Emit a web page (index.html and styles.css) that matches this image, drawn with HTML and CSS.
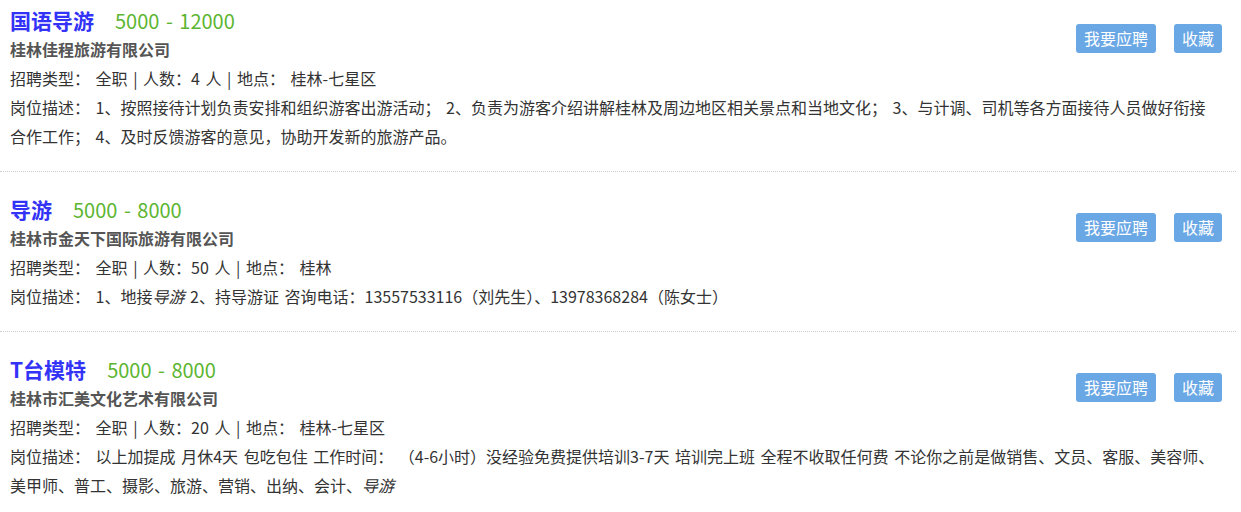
FILE: index.html
```html
<!DOCTYPE html>
<html>
<head>
	<meta charset="utf-8">
	<title>招聘信息</title>
	<link rel="stylesheet" href="styles.css">
</head>
<body>
	<div class="job-list">
		<div class="job-item">
			<div class="job-actions">
				<a href="#" class="btn">我要应聘</a>
				<a href="#" class="btn">收藏</a>
			</div>
			<h3 class="job-title">国语导游<span class="salary">5000 - 12000</span></h3>
			<p class="company">桂林佳程旅游有限公司</p>
			<p class="meta">招聘类型： 全职 | 人数：4 人 | 地点： 桂林-七星区</p>
			<p class="desc">岗位描述： 1、按照接待计划负责安排和组织游客出游活动； 2、负责为游客介绍讲解桂林及周边地区相关景点和当地文化； 3、与计调、司机等各方面接待人员做好衔接合作工作； 4、及时反馈游客的意见，协助开发新的旅游产品。</p>
		</div>

		<div class="job-item">
			<div class="job-actions">
				<a href="#" class="btn">我要应聘</a>
				<a href="#" class="btn">收藏</a>
			</div>
			<h3 class="job-title">导游<span class="salary">5000 - 8000</span></h3>
			<p class="company">桂林市金天下国际旅游有限公司</p>
			<p class="meta">招聘类型： 全职 | 人数：50 人 | 地点： 桂林</p>
			<p class="desc">岗位描述： 1、地接<em>导游</em> 2、持导游证 咨询电话：13557533116（刘先生）、13978368284（陈女士）</p>
		</div>

		<div class="job-item">
			<div class="job-actions">
				<a href="#" class="btn">我要应聘</a>
				<a href="#" class="btn">收藏</a>
			</div>
			<h3 class="job-title">T台模特<span class="salary">5000 - 8000</span></h3>
			<p class="company">桂林市汇美文化艺术有限公司</p>
			<p class="meta">招聘类型： 全职 | 人数：20 人 | 地点： 桂林-七星区</p>
			<p class="desc">岗位描述： 以上加提成 月休4天 包吃包住 工作时间： （4-6小时）没经验免费提供培训3-7天 培训完上班 全程不收取任何费 不论你之前是做销售、文员、客服、美容师、美甲师、普工、摄影、旅游、营销、出纳、会计、<em>导游</em></p>
		</div>
	</div>
</body>
</html>
```

FILE: styles.css
```css
body {
	margin: 0;
	font-family: "Noto Sans CJK SC", "Noto Sans", sans-serif;
	font-size: 16px;
	color: #333;
	background: #fff;
}
.job-list {
	width: 1236px;
}
.job-item {
	padding: 22px 16px 20px 10px;
	border-bottom: 1px dotted #ccc;
}
.job-item:first-child {
	padding-top: 5px;
}
.job-actions {
	float: right;
	display: flex;
	gap: 18px;
	margin-top: 19px;
	margin-right: -2px;
}
.btn {
	display: block;
	height: 29px;
	line-height: 29px;
	padding: 0 8px;
	font-size: 16px;
	color: #fff;
	background-color: #6aa7e5;
	border-radius: 3px;
	text-decoration: none;
}
.job-title {
	margin: 0;
	font-size: 21px;
	line-height: 30px;
	font-weight: bold;
	color: #3333f8;
}
.salary {
	margin-left: 21px;
	font-size: 20px;
	line-height: 20px;
	font-weight: normal;
	color: #5cb531;
	word-spacing: 2px;
}
.company {
	margin: 0;
	font-size: 16px;
	line-height: 29px;
	font-weight: bold;
	color: #555;
}
.meta,
.desc {
	margin: 0;
	line-height: 29px;
	word-spacing: 2px;
}
.desc em {
	font-style: italic;
}
```
